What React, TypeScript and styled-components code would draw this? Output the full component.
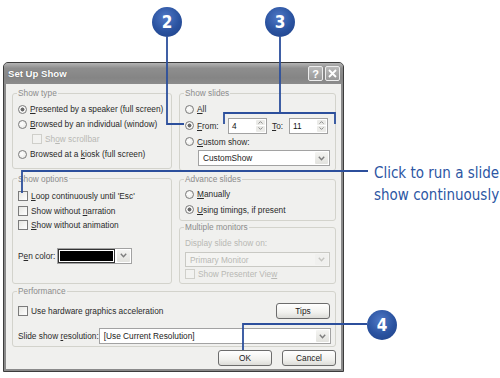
import React from 'react';
import styled, { createGlobalStyle, css } from 'styled-components';

const GlobalStyle = createGlobalStyle`
	html, body {
		margin: 0;
		padding: 0;
		background: #fff;
	}
	body {
		font-family: 'Liberation Sans', Arial, sans-serif;
	}
`;

const Canvas = styled.div`
	position: relative;
	width: 500px;
	height: 378px;
	overflow: hidden;
	background: #fff;
`;

const Window = styled.div`
	position: absolute;
	left: 3px;
	top: 62px;
	width: 341px;
	height: 310px;
	box-sizing: border-box;
	display: flex;
	flex-direction: column;
	padding: 0 2px 2px;
	background: #8a8a8a;
	border: 1px solid #3c3c3c;
	border-radius: 5px 5px 0 0;
`;

const TitleBar = styled.div`
	height: 21px;
	display: flex;
	align-items: center;
	justify-content: space-between;
	padding: 0 1px 0 2px;
	margin: 0 -2px;
	padding-left: 4px;
	padding-right: 3px;
	border-radius: 4px 4px 0 0;
	background: linear-gradient(#b4b4b4 0%, #8e8e8e 25%, #858585 70%, #8c8c8c 100%);
`;

const Title = styled.span`
	color: #fff;
	font-weight: 700;
	font-size: 9.6px;
	text-shadow: 0 0 1px #555;
`;

const CaptionButtons = styled.div`
	display: flex;
	gap: 2px;
`;

const CaptionButton = styled.span`
	width: 15px;
	height: 15px;
	box-sizing: border-box;
	display: flex;
	align-items: center;
	justify-content: center;
	border: 1px solid #ededed;
	border-radius: 2px;
	background: linear-gradient(#b9b9b9, #999);
	color: #fff;
	font-weight: 700;
	font-size: 11px;
`;

const Body = styled.div`
	flex: 1;
	display: flex;
	flex-direction: column;
	padding: 4px 5px 0 6px;
	background: #f0f0ee;
	color: #2a2a2a;
	font-size: 8.3px;
`;

const Columns = styled.div`
	display: grid;
	grid-template-columns: 160px 157px;
	column-gap: 7px;
`;

const Column = styled.div`
	display: flex;
	flex-direction: column;
`;

interface GroupProps {
	$pt?: number;
	$pb?: number;
	$mt?: number;
	$grow?: boolean;
}

const Group = styled.fieldset<GroupProps>`
	margin: ${(p) => p.$mt ?? 0}px 0 0;
	padding: ${(p) => p.$pt ?? 4}px 5px ${(p) => p.$pb ?? 3}px;
	border: 1px solid #d3d3cc;
	border-radius: 3px;
	min-width: 0;
	${(p) =>
		p.$grow &&
		css`
			flex: 1;
		`}
`;

const Legend = styled.legend`
	padding: 0 1px;
	margin-left: -1px;
	font-size: 8.3px;
	line-height: 10px;
	color: #8c8c8c;
`;

interface OptionProps {
	$h?: number;
	$indent?: number;
	$disabled?: boolean;
	$mt?: number;
}

const Option = styled.div<OptionProps>`
	display: flex;
	align-items: center;
	gap: 3px;
	height: ${(p) => p.$h ?? 15}px;
	margin-top: ${(p) => p.$mt ?? 0}px;
	padding-left: ${(p) => p.$indent ?? 0}px;
	white-space: nowrap;
	color: ${(p) => (p.$disabled ? '#b8b8b4' : '#2a2a2a')};
`;

const Radio = styled.span<{ $checked?: boolean }>`
	flex: none;
	width: 9px;
	height: 9px;
	box-sizing: border-box;
	border-radius: 50%;
	border: 1px solid #7b7b7b;
	background: ${(p) =>
		p.$checked
			? 'radial-gradient(circle, #6a6a6a 0 1.7px, #fdfdfd 2.3px, #e4e4e0 100%)'
			: 'radial-gradient(circle at 40% 40%, #fff, #e4e4e0)'};
`;

const Check = styled.span<{ $disabled?: boolean }>`
	flex: none;
	width: 10px;
	height: 10px;
	box-sizing: border-box;
	border: 1px solid ${(p) => (p.$disabled ? '#cfcfca' : '#7b7b7b')};
	background: ${(p) => (p.$disabled ? '#f2f2f0' : 'linear-gradient(135deg, #e6e6e2, #fff)')};
`;

const Label = styled.span<{ $w?: number }>`
	flex: none;
	width: ${(p) => (p.$w ? `${p.$w}px` : 'auto')};
`;

const Spinner = styled.div`
	display: flex;
	width: 39px;
	height: 16px;
	box-sizing: border-box;
	border: 1px solid #a2a2a2;
	background: #fff;
`;

const SpinValue = styled.span`
	flex: 1;
	padding-left: 3px;
	line-height: 14px;
	color: #111;
`;

const SpinButtons = styled.div`
	width: 9px;
	display: flex;
	flex-direction: column;
	gap: 1px;
	padding: 1px;
`;

const SpinButton = styled.span`
	flex: 1;
	display: flex;
	align-items: center;
	justify-content: center;
	background: #ebebe8;
	border-radius: 1px;
`;

interface ComboProps {
	$w: number;
	$h?: number;
	$disabled?: boolean;
	$indent?: number;
	$mt?: number;
}

const Combo = styled.div<ComboProps>`
	display: flex;
	align-items: center;
	width: ${(p) => p.$w}px;
	height: ${(p) => p.$h ?? 16}px;
	margin-left: ${(p) => p.$indent ?? 0}px;
	margin-top: ${(p) => p.$mt ?? 0}px;
	box-sizing: border-box;
	border: 1px solid ${(p) => (p.$disabled ? '#c9c9c4' : '#a2a2a2')};
	background: ${(p) => (p.$disabled ? '#f4f4f2' : '#fff')};
	color: ${(p) => (p.$disabled ? '#b8b8b4' : '#222')};
	padding: 1px;
	flex: none;
`;

const ComboText = styled.span`
	flex: 1;
	padding-left: 3px;
	overflow: hidden;
`;

const ComboArrow = styled.span<{ $disabled?: boolean }>`
	width: 13px;
	height: 100%;
	display: flex;
	align-items: center;
	justify-content: center;
	border-radius: 1px;
	background: ${(p) => (p.$disabled ? '#f0f0ee' : 'linear-gradient(#f4f4f2, #e2e2de)')};
`;

const Swatch = styled.span`
	flex: 1;
	height: 100%;
	margin-right: 3px;
	border: 1px solid #fff;
	box-sizing: border-box;
	background: #000;
	box-shadow: 0 0 0 1px #333;
`;

const PerfRow = styled.div<{ $h: number; $mt?: number }>`
	display: flex;
	align-items: center;
	justify-content: space-between;
	height: ${(p) => p.$h}px;
	margin-top: ${(p) => p.$mt ?? 0}px;
	white-space: nowrap;
`;

const Button = styled.button`
	width: 54px;
	height: 16px;
	padding: 0;
	font-family: 'Liberation Sans', Arial, sans-serif;
	font-size: 8.3px;
	color: #222;
	border: 1px solid #6c6c6c;
	border-radius: 3px;
	background: linear-gradient(#fff 0%, #f1f1ee 60%, #dcdcd8 100%);
`;

const ButtonRow = styled.div`
	display: flex;
	justify-content: flex-end;
	gap: 10px;
	margin-top: 3px;
`;

/* callouts laid over the screenshot */

const Overlay = styled.svg`
	position: absolute;
	left: 0;
	top: 0;
	pointer-events: none;
`;

const Badge = styled.div`
	position: absolute;
	width: 30px;
	height: 30px;
	border-radius: 50%;
	display: flex;
	align-items: center;
	justify-content: center;
	background: radial-gradient(circle at 45% 35%, #4f78c6 0%, #2a529f 55%, #1e3f86 100%);
	color: #fff;
	font-weight: 700;
	font-size: 17px;
	font-family: 'Liberation Sans Narrow', 'DejaVu Sans Condensed', 'Liberation Sans', sans-serif;
`;

const Caption = styled.div`
	position: absolute;
	left: 374px;
	top: 162px;
	color: #2c56a3;
	font-family: 'Liberation Sans Narrow', 'DejaVu Sans Condensed', 'Liberation Sans', sans-serif;
	font-stretch: condensed;
	font-size: 15px;
	line-height: 22px;
	white-space: nowrap;
`;

const Chevron: React.FC<{ color?: string }> = ({ color = '#7d7d7d' }) => (
	<svg width='7' height='5' viewBox='0 0 7 5'>
		<path d='M0.8 0.8 L3.5 3.8 L6.2 0.8' fill='none' stroke={color} strokeWidth='1.4' />
	</svg>
);

const SpinArrow: React.FC<{ up?: boolean }> = ({ up }) => (
	<svg width='5' height='3' viewBox='0 0 5 3'>
		<path d={up ? 'M0.5 2.6 L2.5 0.6 L4.5 2.6' : 'M0.5 0.4 L2.5 2.4 L4.5 0.4'} fill='none' stroke='#8a8a8a' strokeWidth='1' />
	</svg>
);

const SpinBox: React.FC<{ value: string }> = ({ value }) => (
	<Spinner>
		<SpinValue>{value}</SpinValue>
		<SpinButtons>
			<SpinButton>
				<SpinArrow up />
			</SpinButton>
			<SpinButton>
				<SpinArrow />
			</SpinButton>
		</SpinButtons>
	</Spinner>
);

const lines = [
	'M167 37 V124 H184',
	'M280 37 V113 M224 124 V113 H335 V124',
	'M22 193 V171 H368',
	'M367 324 H243 V350',
];

const badges = [
	{ n: '2', x: 167, y: 22 },
	{ n: '3', x: 280, y: 22 },
	{ n: '4', x: 382, y: 325 },
];

export default function App() {
	return (
		<Canvas>
			<GlobalStyle />
			<Window>
				<TitleBar>
					<Title>Set Up Show</Title>
					<CaptionButtons>
						<CaptionButton>?</CaptionButton>
						<CaptionButton>
							<svg width='9' height='9' viewBox='0 0 9 9'>
								<path d='M1 1 L8 8 M8 1 L1 8' stroke='#fff' strokeWidth='1.8' />
							</svg>
						</CaptionButton>
					</CaptionButtons>
				</TitleBar>
				<Body>
					<Columns>
						<Column>
							<Group $pt={3.5} $pb={6}>
								<Legend>Show type</Legend>
								<Option>
									<Radio $checked />
									<span>
										<u>P</u>resented by a speaker (full screen)
									</span>
								</Option>
								<Option>
									<Radio />
									<span>
										<u>B</u>rowsed by an individual (window)
									</span>
								</Option>
								<Option $indent={14} $disabled>
									<Check $disabled />
									<span>
										Sh<u>o</u>w scrollbar
									</span>
								</Option>
								<Option>
									<Radio />
									<span>
										Browsed at a <u>k</u>iosk (full screen)
									</span>
								</Option>
							</Group>
							<Group $mt={5} $pt={5.5} $grow>
								<Legend>Show options</Legend>
								<Option $h={14.5}>
									<Check />
									<span>
										<u>L</u>oop continuously until 'Esc'
									</span>
								</Option>
								<Option $h={14.5}>
									<Check />
									<span>
										Show without <u>n</u>arration
									</span>
								</Option>
								<Option $h={14.5}>
									<Check />
									<span>
										<u>S</u>how without animation
									</span>
								</Option>
								<Option $h={16} $mt={15}>
									<Label $w={36}>
										P<u>e</u>n color:
									</Label>
									<Combo $w={75}>
										<Swatch />
										<ComboArrow>
											<Chevron />
										</ComboArrow>
									</Combo>
								</Option>
							</Group>
						</Column>
						<Column>
							<Group $pt={3.5} $pb={4}>
								<Legend>Show slides</Legend>
								<Option>
									<Radio />
									<span>
										<u>A</u>ll
									</span>
								</Option>
								<Option $h={18}>
									<Radio $checked />
									<Label $w={28}>
										<u>F</u>rom:
									</Label>
									<SpinBox value='4' />
									<Label $w={14} style={{ marginLeft: 2 }}>
										<u>T</u>o:
									</Label>
									<SpinBox value='11' />
								</Option>
								<Option $h={14}>
									<Radio />
									<span>
										<u>C</u>ustom show:
									</span>
								</Option>
								<Combo $w={132} $indent={13} $mt={1.5}>
									<ComboText>CustomShow</ComboText>
									<ComboArrow>
										<Chevron />
									</ComboArrow>
								</Combo>
							</Group>
							<Group $mt={3} $pt={2.5} $pb={2.5}>
								<Legend>Advance slides</Legend>
								<Option>
									<Radio />
									<span>
										<u>M</u>anually
									</span>
								</Option>
								<Option $h={16}>
									<Radio $checked />
									<span>
										<u>U</u>sing timings, if present
									</span>
								</Option>
							</Group>
							<Group $mt={1} $pt={4} $pb={2}>
								<Legend>Multiple monitors</Legend>
								<Option $h={14} $disabled>
									<span>Display slide show on:</span>
								</Option>
								<Combo $w={145} $h={15} $mt={2} $disabled>
									<ComboText>Primary Monitor</ComboText>
									<ComboArrow $disabled>
										<Chevron color='#c4c4c0' />
									</ComboArrow>
								</Combo>
								<Option $h={14} $disabled>
									<Check $disabled />
									<span>
										Show Presenter Vie<u>w</u>
									</span>
								</Option>
							</Group>
						</Column>
					</Columns>
					<Group $mt={2} $pt={6} $pb={2}>
						<Legend>Performance</Legend>
						<PerfRow $h={17}>
							<Option>
								<Check />
								<span>Use hardware graphics acceleration</span>
							</Option>
							<Button>Tips</Button>
						</PerfRow>
						<PerfRow $h={16} $mt={9}>
							<span>
								Slide show <u>r</u>esolution:
							</span>
							<Combo $w={232}>
								<ComboText>[Use Current Resolution]</ComboText>
								<ComboArrow>
									<Chevron />
								</ComboArrow>
							</Combo>
						</PerfRow>
					</Group>
					<ButtonRow>
						<Button>OK</Button>
						<Button>Cancel</Button>
					</ButtonRow>
				</Body>
			</Window>
			<Overlay width='500' height='378' viewBox='0 0 500 378'>
				{lines.map((d) => (
					<path key={d} d={d} fill='none' stroke='#2c4f9c' strokeWidth='1.8' />
				))}
			</Overlay>
			{badges.map((b) => (
				<Badge key={b.n} style={{ left: b.x - 15, top: b.y - 15 }}>
					{b.n}
				</Badge>
			))}
			<Caption>
				Click to run a slide
				<br />
				show continuously
			</Caption>
		</Canvas>
	);
}
